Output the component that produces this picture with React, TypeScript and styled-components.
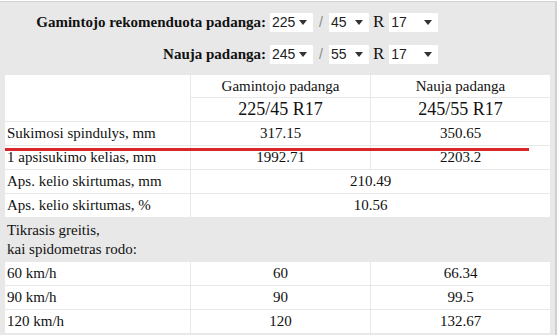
import React from "react";
import styled, { createGlobalStyle } from "styled-components";

const serif = `"Liberation Serif", "Times New Roman", serif`;
const sans = `"Liberation Sans", Arial, sans-serif`;

const Global = createGlobalStyle`
  html, body { margin: 0; padding: 0; background: #ffffff; }
  body { font-family: ${serif}; color: #111; }
`;

const Panel = styled.div`
  box-sizing: border-box;
  width: 557px;
  margin-top: 1px;
  height: 334px;
  background: #e8e8e8;
  border-top: 1px solid #d2d2d2;
  border-right: 2px solid #d0d0d0;
  padding: 4px 5px 0 4px;
  overflow: hidden;
  font-family: ${serif};
`;

const Form = styled.div`
  display: grid;
  grid-template-columns: 266px auto;
  grid-auto-rows: 32px;
  align-items: center;
  margin-bottom: 4px;
`;

const Label = styled.label`
  font-family: ${serif};
  font-weight: bold;
  font-size: 15px;
  text-align: right;
  padding-right: 4px;
  white-space: nowrap;
`;

const Controls = styled.div`
  display: flex;
  align-items: center;
`;

const SelectBox = styled.div<{ $w: number }>`
  position: relative;
  width: ${(p) => p.$w}px;
  height: 19px;
  background: #ffffff;
`;

const NativeSelect = styled.select`
  appearance: none;
  -webkit-appearance: none;
  border: none;
  outline: none;
  background: transparent;
  width: 100%;
  height: 100%;
  margin: 0;
  padding: 0 0 0 2px;
  font-family: ${sans};
  font-size: 14px;
  color: #222;
`;

const Arrow = styled.svg`
  position: absolute;
  right: 6px;
  top: 7px;
  pointer-events: none;
`;

const Slash = styled.span`
  font-family: ${sans};
  font-size: 14px;
  color: #8a8a8a;
  margin: 0 6px 0 6px;
`;

const RimMark = styled.span`
  font-family: ${serif};
  font-size: 17px;
  margin: 0 5px 0 4px;
`;

const TableWrap = styled.div`
  position: relative;
`;

const Grid = styled.table`
  width: 546px;
  border-collapse: collapse;
  table-layout: fixed;
  font-family: ${serif};
  font-size: 15px;
`;

const Row = styled.tr<{ $h?: number; $section?: boolean }>`
  height: ${(p) => p.$h ?? 24}px;
  background: ${(p) => (p.$section ? "transparent" : "#ffffff")};
`;

const Cell = styled.td<{ $left?: boolean; $big?: boolean }>`
  border: 1px solid #e8e8e8;
  padding: 0 2px;
  font-family: ${serif};
  text-align: ${(p) => (p.$left ? "left" : "center")};
  font-size: ${(p) => (p.$big ? 18 : 15)}px;
  vertical-align: middle;
  line-height: 19px;
  white-space: nowrap;
  color: #111;
`;

const Underline = styled.div`
  position: absolute;
  left: 1px;
  top: 74px;
  width: 524px;
  height: 3px;
  background: #d8262b;
`;

type Opt = { value: string; width: number };

const Picker = ({ value, width }: Opt) => (
  <SelectBox $w={width}>
    <NativeSelect defaultValue={value}>
      <option value={value}>{value}</option>
    </NativeSelect>
    <Arrow width="8" height="5" viewBox="0 0 8 5">
      <path d="M0 0 H8 L4 5 Z" fill="#333" />
    </Arrow>
  </SelectBox>
);

const SizeRow = ({ label, w, p, r }: { label: string; w: string; p: string; r: string }) => (
  <>
    <Label>{label}</Label>
    <Controls>
      <Picker value={w} width={43} />
      <Slash>/</Slash>
      <Picker value={p} width={40} />
      <RimMark>R</RimMark>
      <Picker value={r} width={49} />
    </Controls>
  </>
);

const stats: [string, string, string][] = [
  ["Sukimosi spindulys, mm", "317.15", "350.65"],
  ["1 apsisukimo kelias, mm", "1992.71", "2203.2"],
];

const diffs: [string, string][] = [
  ["Aps. kelio skirtumas, mm", "210.49"],
  ["Aps. kelio skirtumas, %", "10.56"],
];

const speeds: [string, string, string][] = [
  ["60 km/h", "60", "66.34"],
  ["90 km/h", "90", "99.5"],
  ["120 km/h", "120", "132.67"],
];

export default function App() {
  return (
    <>
      <Global />
      <Panel>
        <Form>
          <SizeRow label="Gamintojo rekomenduota padanga:" w="225" p="45" r="17" />
          <SizeRow label="Nauja padanga:" w="245" p="55" r="17" />
        </Form>
        <TableWrap>
          <Grid>
            <colgroup>
              <col style={{ width: 186 }} />
              <col style={{ width: 180 }} />
              <col style={{ width: 180 }} />
            </colgroup>
            <tbody>
              <Row $h={23}>
                <Cell rowSpan={2} />
                <Cell>Gamintojo padanga</Cell>
                <Cell>Nauja padanga</Cell>
              </Row>
              <Row>
                <Cell $big>225/45 R17</Cell>
                <Cell $big>245/55 R17</Cell>
              </Row>
              {stats.map(([name, a, b]) => (
                <Row key={name}>
                  <Cell $left>{name}</Cell>
                  <Cell>{a}</Cell>
                  <Cell>{b}</Cell>
                </Row>
              ))}
              {diffs.map(([name, v]) => (
                <Row key={name}>
                  <Cell $left>{name}</Cell>
                  <Cell colSpan={2}>{v}</Cell>
                </Row>
              ))}
              <Row $h={44} $section>
                <Cell $left colSpan={3}>
                  Tikrasis greitis,
                  <br />
                  kai spidometras rodo:
                </Cell>
              </Row>
              {speeds.map(([name, a, b]) => (
                <Row key={name}>
                  <Cell $left>{name}</Cell>
                  <Cell>{a}</Cell>
                  <Cell>{b}</Cell>
                </Row>
              ))}
            </tbody>
          </Grid>
          <Underline />
        </TableWrap>
      </Panel>
    </>
  );
}
